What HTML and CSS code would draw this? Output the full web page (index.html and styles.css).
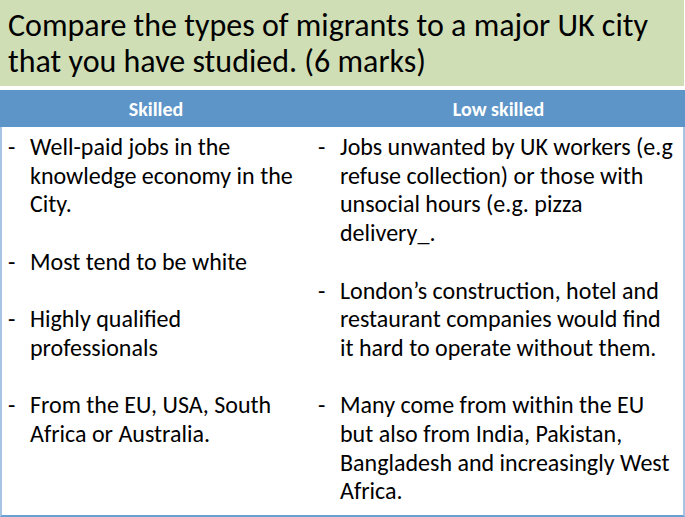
FILE: index.html
```html
<!DOCTYPE html>
<html>
<head>
<meta charset="utf-8">
<link rel="stylesheet" href="styles.css">
</head>
<body>
<div class="slide">
  <div class="title">Compare the types of migrants to a major UK city<br>that you have studied. (6 marks)</div>
  <div class="table">
    <div class="head">
      <div class="hcell">Skilled</div>
      <div class="hcell">Low skilled</div>
    </div>
    <div class="body">
      <ul class="col">
        <li>Well-paid jobs in the<br>knowledge economy in the<br>City.</li>
        <li>Most tend to be white</li>
        <li>Highly qualified<br>professionals</li>
        <li>From the EU, USA, South<br>Africa or Australia.</li>
      </ul>
      <ul class="col">
        <li>Jobs unwanted by UK workers (e.g<br>refuse collection) or those with<br>unsocial hours (e.g. pizza<br>delivery_.</li>
        <li>London’s construction, hotel and<br>restaurant companies would find<br>it hard to operate without them.</li>
        <li>Many come from within the EU<br>but also from India, Pakistan,<br>Bangladesh and increasingly West<br>Africa.</li>
      </ul>
    </div>
  </div>
</div>
</body>
</html>
```
FILE: styles.css
```css
html, body { margin: 0; padding: 0; background: #fff; }
.slide {
  width: 685px;
  height: 517px;
  font-family: Carlito, Calibri, "Open Sans", sans-serif;
  color: #000;
  display: flex;
  flex-direction: column;
  overflow: hidden;
}
.title {
  flex-shrink: 0;
  background: #d0deb6;
  height: 86px;
  box-sizing: border-box;
  padding: 8px 0 0 8px;
  font-size: 32px;
  line-height: 36px;
  white-space: nowrap;
  border-right: 1px solid #fff;
}
.table {
  margin-top: 4px;
  flex: 1;
  min-height: 0;
  display: flex;
  flex-direction: column;
}
.head {
  flex-shrink: 0;
  display: grid;
  grid-template-columns: 312px 1fr;
  background: #5d95c8;
  height: 37px;
  align-items: center;
}
.hcell {
  color: #fff;
  font-weight: bold;
  font-size: 20px;
  text-align: center;
}
.body {
  flex: 1;
  min-height: 0;
  display: grid;
  grid-template-columns: 310px 1fr;
  border-left: 2px solid #a7c4e4;
  border-right: 2px solid #a7c4e4;
  border-bottom: 2px solid #6aa0d2;
}
.col {
  list-style: none;
  margin: 0;
  padding: 6px 0 0 0;
  white-space: nowrap;
}
.col li {
  position: relative;
  padding-left: 28px;
  font-size: 24px;
  line-height: 28.7px;
  margin-bottom: 28.7px;
}
.col li::before {
  content: "-";
  position: absolute;
  left: 6px;
  top: 0;
}
```
